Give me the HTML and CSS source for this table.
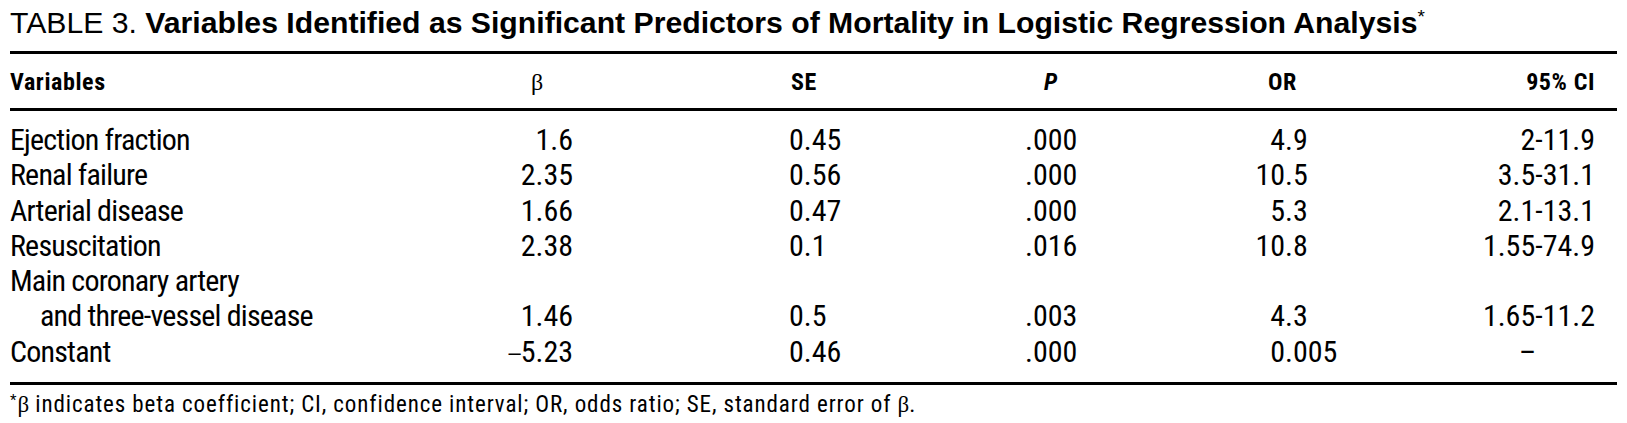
FILE: index.html
```html
<!DOCTYPE html>
<html lang="en">
<head>
<meta charset="utf-8">
<title>Table 3</title>
<link rel="stylesheet" href="styles.css">
</head>
<body>
<div class="page">
  <h1 class="title"><span class="title-label">TABLE 3.</span> <span class="title-text">Variables Identified as Significant Predictors of Mortality in Logistic Regression Analysis</span><sup class="title-star">*</sup></h1>
  <table class="data">
    <colgroup>
      <col class="w-var">
      <col class="w-beta">
      <col class="w-se">
      <col class="w-p">
      <col class="w-or">
      <col class="w-ci">
    </colgroup>
    <thead>
      <tr>
        <th class="h-var">Variables</th>
        <th class="h-beta"><span class="greek">β</span></th>
        <th class="h-se">SE</th>
        <th class="h-p"><i>P</i></th>
        <th class="h-or">OR</th>
        <th class="h-ci">95% CI</th>
      </tr>
    </thead>
    <tbody>
      <tr>
        <td class="c-var">Ejection fraction</td>
        <td class="c-beta">1.6</td>
        <td class="c-se">0.45</td>
        <td class="c-p">.000</td>
        <td class="c-or"><span class="int">4</span>.9</td>
        <td class="c-ci">2-11.9</td>
      </tr>
      <tr>
        <td class="c-var">Renal failure</td>
        <td class="c-beta">2.35</td>
        <td class="c-se">0.56</td>
        <td class="c-p">.000</td>
        <td class="c-or"><span class="int">10</span>.5</td>
        <td class="c-ci">3.5-31.1</td>
      </tr>
      <tr>
        <td class="c-var">Arterial disease</td>
        <td class="c-beta">1.66</td>
        <td class="c-se">0.47</td>
        <td class="c-p">.000</td>
        <td class="c-or"><span class="int">5</span>.3</td>
        <td class="c-ci">2.1-13.1</td>
      </tr>
      <tr>
        <td class="c-var">Resuscitation</td>
        <td class="c-beta">2.38</td>
        <td class="c-se">0.1</td>
        <td class="c-p">.016</td>
        <td class="c-or"><span class="int">10</span>.8</td>
        <td class="c-ci">1.55-74.9</td>
      </tr>
      <tr>
        <td class="c-var c-hang">Main coronary artery<br>and three-vessel disease</td>
        <td class="c-beta">1.46</td>
        <td class="c-se">0.5</td>
        <td class="c-p">.003</td>
        <td class="c-or"><span class="int">4</span>.3</td>
        <td class="c-ci">1.65-11.2</td>
      </tr>
      <tr>
        <td class="c-var">Constant</td>
        <td class="c-beta"><span class="neg">–</span>5.23</td>
        <td class="c-se">0.46</td>
        <td class="c-p">.000</td>
        <td class="c-or"><span class="int">0</span>.005</td>
        <td class="c-ci c-none">–</td>
      </tr>
    </tbody>
  </table>
  <p class="note"><sup class="note-star">*</sup><span class="greek">β</span> indicates beta coefficient; CI, confidence interval; OR, odds ratio; SE, standard error of <span class="greek">β</span>.</p>
</div>
</body>
</html>
```
FILE: styles.css
```css
html, body {
  margin: 0;
  padding: 0;
  background: #fff;
  color: #000;
}

.page {
  width: 1607px;
  padding: 3px 0 0 10px;
  font-family: Roboto, "Liberation Sans", sans-serif;
  font-stretch: 75%;
}

.title {
  margin: 0 0 8px 0;
  font-family: "Liberation Sans", Arial, sans-serif;
  font-stretch: normal;
  font-size: 30.2px;
  line-height: 40px;
  font-weight: normal;
  white-space: nowrap;
}

.title-text {
  font-weight: bold;
}

.title-star {
  font-size: 19px;
  line-height: 0;
  font-weight: normal;
  vertical-align: 0;
  position: relative;
  top: -10px;
}

.data {
  width: 1607px;
  border-collapse: collapse;
  table-layout: fixed;
}

.w-var { width: 489px; }
.w-beta { width: 141px; }
.w-se { width: 260px; }
.w-p { width: 250px; }
.w-or { width: 310px; }
.w-ci { width: 157px; }

.data thead tr {
  border-top: 3px solid #000;
  border-bottom: 3px solid #000;
}

.data th {
  padding: 16px 0 14px 0;
  font-size: 24px;
  line-height: 24px;
  font-weight: bold;
  letter-spacing: 0.6px;
  text-align: left;
  white-space: nowrap;
}

.h-var { letter-spacing: 0.1px; }
.h-beta { padding-left: 32px !important; }
.h-se { padding-left: 151px !important; }
.h-p { padding-left: 144px !important; }
.h-or { padding-left: 118px !important; }
.h-ci { text-align: right !important; padding-right: 22px !important; }

.greek {
  font-family: "Liberation Serif", "DejaVu Serif", serif;
  font-stretch: normal;
  font-weight: normal;
  letter-spacing: 0;
  line-height: 0;
}

.data tbody tr:last-child {
  border-bottom: 3px solid #000;
}

.data td {
  padding: 0;
  font-size: 30px;
  line-height: 35.3px;
  font-weight: 370;
  vertical-align: bottom;
  white-space: nowrap;
}

.data tbody tr:first-child td { padding-top: 11px; }
.data tbody tr:last-child td { padding-bottom: 13px; }

.c-var {
  letter-spacing: -0.8px;
}

.c-hang {
  padding-left: 30px !important;
  text-indent: -30px;
}

.c-beta { text-align: right; padding-right: 67px !important; }
.c-se { padding-left: 149px !important; }
.c-p { padding-left: 125px !important; }
.c-or { padding-left: 98px !important; }
.c-ci { text-align: right; padding-right: 22px !important; }
.c-none { text-align: center; padding-right: 22px !important; }

.neg {
  font-family: "Liberation Sans", Arial, sans-serif;
  font-stretch: normal;
  font-size: 22px;
  line-height: 0;
  vertical-align: 2px;
}

.int {
  display: inline-block;
  width: 37px;
  text-align: right;
}

.note {
  margin: 8px 0 0 0;
  font-size: 23px;
  line-height: 24px;
  font-weight: 370;
  letter-spacing: 0.9px;
  white-space: nowrap;
}

.note-star {
  font-size: 15px;
  line-height: 0;
  vertical-align: 0;
  position: relative;
  top: -7px;
}
```
